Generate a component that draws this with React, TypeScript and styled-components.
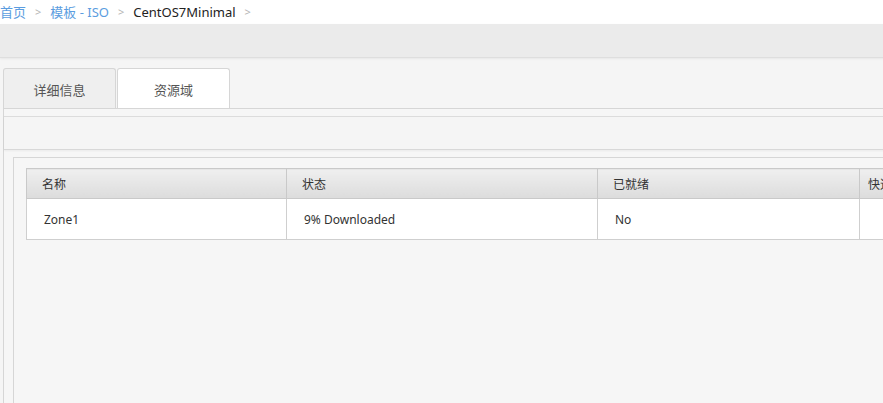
import React from "react";
import styled, { createGlobalStyle } from "styled-components";

const Global = createGlobalStyle`
  html, body { margin: 0; padding: 0; background: #f5f5f5; overflow: hidden; }
  body { font-family: "Noto Sans", "Noto Sans CJK SC", sans-serif; color: #333; }
`;

const Page = styled.div`
  width: 1100px;
  height: 403px;
  display: flex;
  flex-direction: column;
  background: #f5f5f5;
`;

const Breadcrumb = styled.div`
  height: 24px;
  background: #fff;
  display: flex;
  align-items: center;
  font-size: 13px;
  line-height: 24px;
`;

const Crumb = styled.span<{ $current?: boolean }>`
  color: ${(p) => (p.$current ? "#222" : "#5b9de0")};
`;

const Sep = styled.span`
  color: #b5b5b5;
  font-size: 11px;
  margin: 0 9px 0 9px;
`;

const ActionBar = styled.div`
  height: 33px;
  background: #ebebeb;
  border-bottom: 1px solid #dedede;
  box-shadow: 0 1px 2px rgba(0, 0, 0, 0.06);
`;

const Content = styled.div`
  flex: 1;
  padding: 10px 0 0 3px;
  display: flex;
  flex-direction: column;
`;

const Tabs = styled.div`
  display: flex;
  gap: 1px;
`;

const Tab = styled.div<{ $active?: boolean }>`
  width: 111px;
  height: 38px;
  border: 1px solid #d6d6d6;
  border-bottom: none;
  border-radius: 3px 3px 0 0;
  background: ${(p) => (p.$active ? "#ffffff" : "#efefef")};
  color: #555;
  font-size: 13px;
  display: flex;
  align-items: center;
  justify-content: center;
  padding-top: 1px;
  box-sizing: content-box;
`;

const Panel = styled.div`
  flex: 1;
  border-left: 1px solid #d6d6d6;
  border-top: 1px solid #d6d6d6;
  padding-top: 7px;
  background: #f6f6f6;
  display: flex;
  flex-direction: column;
`;

const PanelToolbar = styled.div`
  height: 32px;
  border-top: 1px solid #dcdcdc;
  border-bottom: 1px solid #d8d8d8;
  box-shadow: 0 1px 2px rgba(0, 0, 0, 0.05);
  background: #f5f5f5;
`;

const ListBox = styled.div`
  flex: 1;
  margin: 7px 0 0 9px;
  border-left: 1px solid #d6d6d6;
  border-top: 1px solid #d6d6d6;
  padding: 10px 0 0 12px;
`;

const Table = styled.table`
  border-collapse: collapse;
  font-size: 12px;
  table-layout: fixed;
  width: 1000px;
`;

const Th = styled.th<{ $w: number; $pad?: number }>`
  width: ${(p) => p.$w}px;
  height: 30px;
  padding: 0 0 0 ${(p) => p.$pad ?? 15}px;
  text-align: left;
  font-weight: normal;
  color: #333;
  background: linear-gradient(#efefef, #dcdcdc);
  border: 1px solid #c9c9c9;
  box-sizing: border-box;
  white-space: nowrap;
  overflow: hidden;
`;

const Td = styled.td`
  height: 41px;
  padding: 0 0 0 17px;
  background: #fff;
  border: 1px solid #cfcfcf;
  box-sizing: border-box;
  color: #333;
`;

export default function App() {
  return (
    <>
      <Global />
      <Page>
        <Breadcrumb>
          <Crumb>首页</Crumb>
          <Sep>&gt;</Sep>
          <Crumb>模板 - ISO</Crumb>
          <Sep>&gt;</Sep>
          <Crumb $current>CentOS7Minimal</Crumb>
          <Sep>&gt;</Sep>
        </Breadcrumb>
        <ActionBar />
        <Content>
          <Tabs>
            <Tab>详细信息</Tab>
            <Tab $active>资源域</Tab>
          </Tabs>
          <Panel>
            <PanelToolbar />
            <ListBox>
              <Table>
                <thead>
                  <tr>
                    <Th $w={260}>名称</Th>
                    <Th $w={311}>状态</Th>
                    <Th $w={262}>已就绪</Th>
                    <Th $w={167} $pad={8}>快速查看</Th>
                  </tr>
                </thead>
                <tbody>
                  <tr>
                    <Td>Zone1</Td>
                    <Td>9% Downloaded</Td>
                    <Td>No</Td>
                    <Td></Td>
                  </tr>
                </tbody>
              </Table>
            </ListBox>
          </Panel>
        </Content>
      </Page>
    </>
  );
}
